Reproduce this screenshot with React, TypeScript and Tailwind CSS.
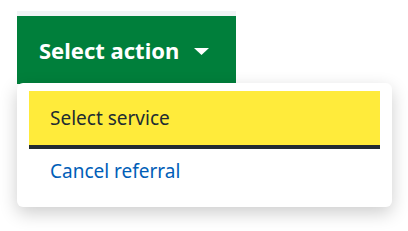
import React from "react";

export default function App() {
  return (
    <div className="min-h-screen bg-white pl-[17px] pt-[11px] font-['Noto_Sans',sans-serif]">
      <div className="flex flex-col items-start w-[375px]">
        {/* Action button */}
        <button className="flex items-center gap-[15px] h-[73px] w-[219px] border-t-[5px] border-[#f0f4f5] bg-[#007f3b] pl-[22px] text-[22px] font-bold text-white">
          <span>Select action</span>
          <svg width="15" height="7" viewBox="0 0 15 7" className="mt-[3px]">
            <path d="M0 0h15L7.5 7z" fill="#fff" />
          </svg>
        </button>

        {/* Dropdown menu */}
        <div className="-mt-px w-[375px] h-[124px] rounded-[6px] bg-white px-[12px] pt-[8px] shadow-[0_6px_18px_rgba(0,0,0,0.2)]">
          <div className="flex h-[54px] items-center bg-[#ffeb3b] pl-[21px] text-[19px] text-[#212b32] border-b-[4px] border-[#212b32] box-content">
            Select service
          </div>
          <div className="flex h-[44px] items-center pl-[21px] text-[19px] text-[#005eb8]">
            Cancel referral
          </div>
        </div>
      </div>
    </div>
  );
}
